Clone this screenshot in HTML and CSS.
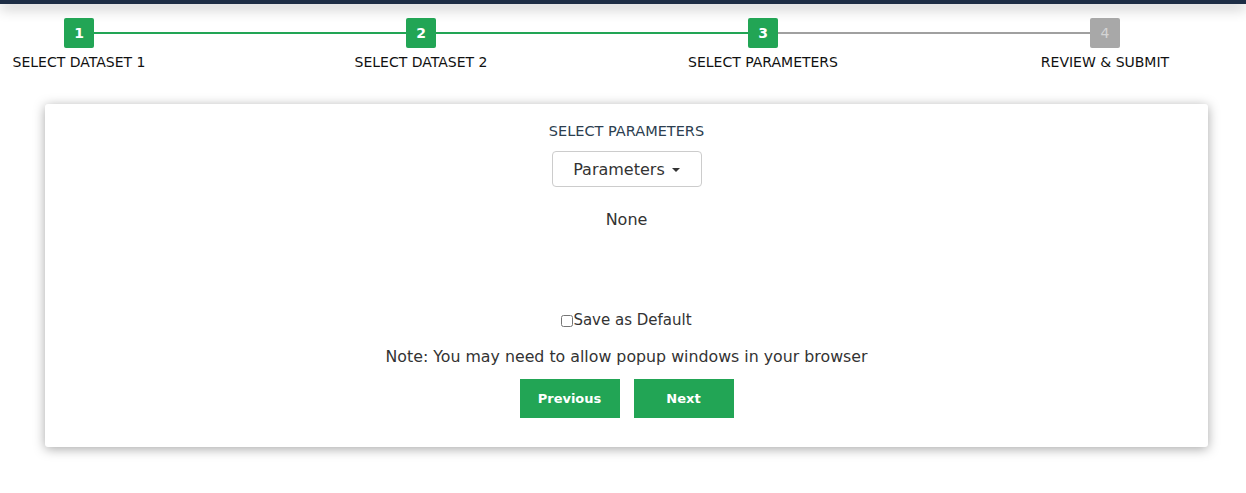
FILE: index.html
```html
<!DOCTYPE html>
<html>
<head>
<meta charset="utf-8">
<link rel="stylesheet" href="styles.css">
</head>
<body>
<div class="topbar"></div>
<div class="stepper">
  <div class="track">
    <div class="box done">1</div>
    <div class="seg done"></div>
    <div class="box done">2</div>
    <div class="seg done"></div>
    <div class="box done">3</div>
    <div class="seg"></div>
    <div class="box todo">4</div>
  </div>
  <div class="labels">
    <div class="label">SELECT DATASET 1</div>
    <div class="label">SELECT DATASET 2</div>
    <div class="label">SELECT PARAMETERS</div>
    <div class="label">REVIEW &amp; SUBMIT</div>
  </div>
</div>
<div class="card">
  <div class="title">SELECT PARAMETERS</div>
  <button class="dropdown">Parameters <span class="caret"></span></button>
  <div class="none">None</div>
  <label class="save"><input type="checkbox" class="chk">Save as Default</label>
  <div class="note">Note: You may need to allow popup windows in your browser</div>
  <div class="actions">
    <button class="btn">Previous</button>
    <button class="btn">Next</button>
  </div>
</div>
</body>
</html>
```
FILE: styles.css
```css
html, body {
  margin: 0;
  padding: 0;
  background: #fff;
  font-family: "DejaVu Sans", "Open Sans", sans-serif;
  color: #333;
}
body {
  padding-bottom: 40px;
}
.topbar {
  height: 4px;
  background: #1d2d45;
  box-shadow: 0 3px 14px rgba(0,0,0,0.45);
}
.stepper {
  padding-top: 14px;
}
.track {
  display: flex;
  align-items: center;
  margin-left: 64px;
  width: 1056px;
}
.box {
  width: 30px;
  height: 30px;
  border-radius: 2px;
  display: flex;
  align-items: center;
  justify-content: center;
  font-size: 14px;
  font-weight: bold;
  color: #fff;
  flex: none;
}
.box.done { background: #22a555; }
.box.todo { background: #a8a8a8; color: #d4d4d4; font-weight: normal; }
.seg {
  flex: 1;
  height: 2px;
  background: #a0a0a0;
}
.seg.done { background: #22a555; }
.labels {
  display: flex;
  gap: 212px;
  padding-left: 14px;
  margin-top: 6px;
}
.label {
  width: 130px;
  text-align: center;
  white-space: nowrap;
  font-size: 14px;
  color: #111;
  line-height: 16px;
  display: flex;
  justify-content: center;
}
.card {
  margin: 34px 38px 0 45px;
  height: 343px;
  background: #fff;
  border-radius: 3px;
  box-shadow: 0 2px 12px rgba(0,0,0,0.35);
  display: flex;
  flex-direction: column;
  align-items: center;
  box-sizing: border-box;
  padding-top: 19px;
}
.title {
  font-size: 14.5px;
  color: #2c3e50;
  line-height: 16px;
}
.dropdown {
  margin-top: 12px;
  width: 150px;
  height: 36px;
  border: 1px solid #ccc;
  border-radius: 4px;
  background: #fff;
  font-family: inherit;
  font-size: 16px;
  color: #333;
  padding: 0;
}
.caret {
  display: inline-block;
  width: 0;
  height: 0;
  border-left: 4px solid transparent;
  border-right: 4px solid transparent;
  border-top: 4px solid #333;
  vertical-align: middle;
  margin-left: 2px;
}
.none {
  margin-top: 23px;
  font-size: 16px;
  line-height: 20px;
}
.save {
  margin-top: 80px;
  font-size: 15px;
  line-height: 20px;
  display: flex;
  align-items: center;
}
.chk {
  margin: 2px 0 0 0;
  width: 12px;
  height: 12px;
}
.note {
  margin-top: 17px;
  font-size: 15.8px;
  line-height: 20px;
}
.actions {
  margin-top: 12px;
  display: flex;
  gap: 14px;
}
.btn {
  width: 100px;
  height: 39px;
  border: none;
  border-radius: 0;
  background: #22a555;
  color: #fff;
  font-family: inherit;
  font-weight: bold;
  font-size: 13px;
  padding: 0;
}
```
